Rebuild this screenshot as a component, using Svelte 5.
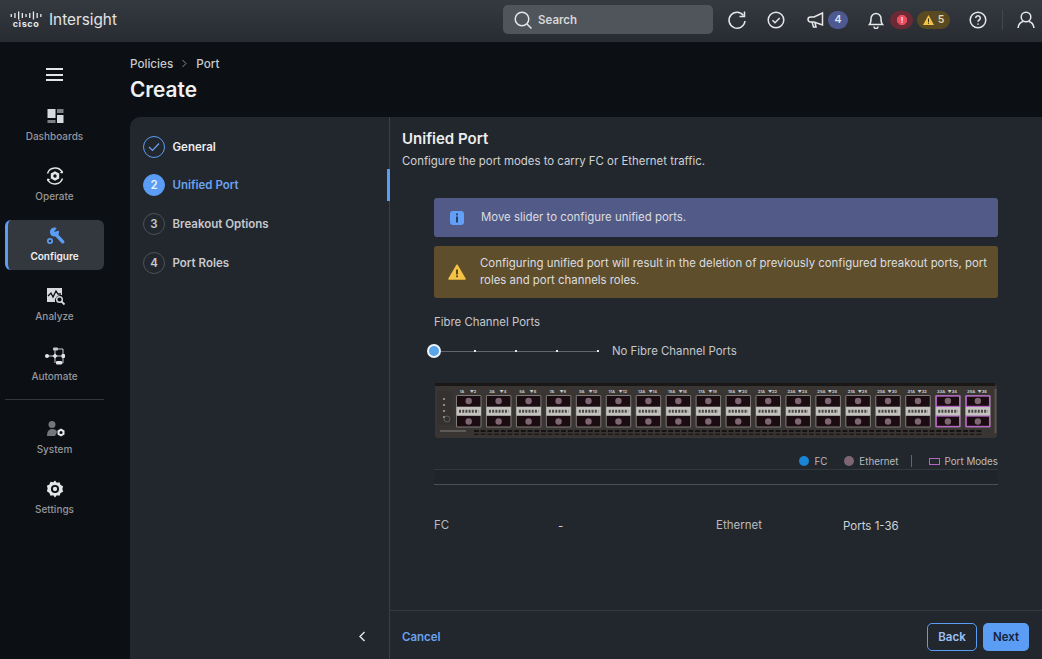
<script>
  const navTop = [
    { name: "Dashboards", icon: "dash" },
    { name: "Operate", icon: "operate" },
    { name: "Configure", icon: "wrench", active: true },
    { name: "Analyze", icon: "analyze" },
    { name: "Automate", icon: "automate" },
  ];
  const navBottom = [
    { name: "System", icon: "system" },
    { name: "Settings", icon: "gear" },
  ];
  const steps = [
    { n: 1, name: "General", state: "done" },
    { n: 2, name: "Unified Port", state: "current" },
    { n: 3, name: "Breakout Options", state: "todo" },
    { n: 4, name: "Port Roles", state: "todo" },
  ];
  const ports = Array.from({ length: 18 }, (_, i) => ({
    x: 22 + i * 29.95,
    top: i * 2 + 1,
    bottom: i * 2 + 2,
    mode: i >= 16,
  }));
  const vents = Array.from({ length: 76 }, (_, i) => 40 + i * 6.7);
  const logoBars = [3, 5, 8, 5, 3, 5, 8, 5, 3];
</script>

{#snippet navIcon(icon)}
  <svg class="nav-icon" viewBox="0 0 24 24" width="24" height="24">
    {#if icon === "dash"}
      <rect x="4.500" y="5" width="8" height="9" fill="#d8dadd" />
      <rect x="4.500" y="16" width="8" height="3" fill="#7c8085" />
      <rect x="14" y="5" width="6.500" height="4" fill="#7c8085" />
      <rect x="14" y="11" width="6.500" height="8" fill="#d8dadd" />
    {:else if icon === "operate"}
      <path d="M4.500 9.500a8 8 0 0 1 15-.5M19.500 14.500a8 8 0 0 1-15 .5" fill="none" stroke="#e4e5e7" stroke-width="1.400" />
      <path d="M19.800 6.500l-.3 3-2.800-.8zM4.200 17.500l.3-3 2.800.8z" fill="#e4e5e7" />
      <path d="M12 7.200l4.200 2.400v4.800L12 16.800l-4.200-2.400V9.600z" fill="#e4e5e7" />
      <circle cx="12" cy="12" r="1.700" fill="#0c0f13" />
    {:else if icon === "wrench"}
      <path d="M12 9.500l7.800 8.300" stroke="#5b9cf5" stroke-width="3.400" stroke-linecap="round" />
      <circle cx="11.500" cy="8" r="4.600" fill="#5b9cf5" />
      <path d="M11 8l4-6 5 3.500z" fill="#33373e" />
      <circle cx="7" cy="17" r="2.200" fill="none" stroke="#5b9cf5" stroke-width="1.700" />
    {:else if icon === "analyze"}
      <path d="M4 4h15v7a6 6 0 0 0-7 7H4z" fill="#d8dadd" />
      <path d="M5 12l3-3 2 4 3-6 2 3h3" fill="none" stroke="#0c0f13" stroke-width="1.300" />
      <circle cx="16.500" cy="15.500" r="2.800" fill="none" stroke="#d8dadd" stroke-width="1.400" />
      <path d="M18.500 17.500l3 3" stroke="#d8dadd" stroke-width="1.800" />
    {:else if icon === "automate"}
      <path d="M3 12h18M12 5v14M12 5h8v7M14 19h6v-7" fill="none" stroke="#c8cacd" stroke-width="1" />
      <circle cx="4" cy="12" r="2" fill="#e4e5e7" />
      <path d="M12 9.500l2.500 2.500-2.500 2.500-2.500-2.500z" fill="#e4e5e7" />
      <rect x="10" y="3.500" width="5" height="3" rx="1" fill="#c8cacd" />
      <rect x="18.500" y="10" width="3.500" height="4" rx="1" fill="#e4e5e7" />
      <rect x="13" y="17" width="6" height="3.500" rx="1" fill="#e4e5e7" />
    {:else if icon === "system"}
      <circle cx="9" cy="7.500" r="3.500" fill="#73777c" />
      <path d="M4 19c0-5 2-7 5-7s4.500 1 5 3l-2 4z" fill="#73777c" />
      <path d="M18 11.500l3.500 2v4l-3.500 2-3.500-2v-4z" fill="#e4e5e7" />
      <circle cx="18" cy="15.500" r="1.500" fill="#0c0f13" />
    {:else}
      <g transform="translate(1.200 1.200) scale(0.9)">
        <path d="M12 2.500l2 2.500 3-.5 1.200 3 2.800 1.500-.8 3 .8 3-2.800 1.500-1.200 3-3-.5-2 2.500-2-2.500-3 .5-1.200-3L3 14.500l.8-3-.8-3 2.800-1.500 1.200-3 3 .5z" fill="#e4e5e7" />
        <circle cx="12" cy="12" r="4.500" fill="#0c0f13" />
        <circle cx="12" cy="12" r="2.400" fill="#e4e5e7" />
      </g>
    {/if}
  </svg>
{/snippet}

<div class="page">
  <header class="topbar">
    <div class="brand">
      <div class="cisco">
        <svg width="32" height="9" viewBox="0 0 32 9">
          {#each logoBars as h, i}
            <rect x={i * 3.7 + 0.600} y={(9 - h) / 2} width="1.300" height={h} fill="#e8e9ea" />
          {/each}
        </svg>
        <span>cisco</span>
      </div>
      <span class="product">Intersight</span>
    </div>

    <div class="search">
      <svg width="20" height="20" viewBox="0 0 20 20" fill="none" stroke="#e6e7e8" stroke-width="1.500">
        <circle cx="9" cy="9" r="6.800" />
        <path d="M14 14l4.500 4.500" />
      </svg>
      <span>Search</span>
    </div>

    <div class="tools">
      <svg class="tool refresh" width="20" height="20" viewBox="0 0 20 20" fill="none" stroke="#e6e7e8" stroke-width="1.500">
        <path d="M16.500 5.500A8 8 0 1 0 18 11" />
        <path d="M17.500 1.500v5h-5" />
      </svg>
      <svg class="tool check" width="18" height="18" viewBox="0 0 18 18" fill="none" stroke="#e6e7e8" stroke-width="1.500">
        <circle cx="9" cy="9" r="7.800" />
        <path d="M5.500 9.200l2.500 2.500 4.700-4.700" />
      </svg>
      <svg class="tool megaphone" width="17" height="18" viewBox="0 0 17 18" fill="none" stroke="#e6e7e8" stroke-width="1.500">
        <path d="M15.500 2v12L7 11H3.500a2.500 2.500 0 0 1 0-5H7z" />
        <path d="M5 11l1.500 5h2.500l-1-4.500" />
      </svg>
      <span class="badge blue">4</span>
      <svg class="tool bell" width="16" height="18" viewBox="0 0 16 18" fill="none" stroke="#e6e7e8" stroke-width="1.500">
        <path d="M1.500 13.500c1.500-1.500 1.500-3 1.500-6a5 5 0 0 1 10 0c0 3 0 4.500 1.500 6z" />
        <path d="M6 15.500a2 2 0 0 0 4 0" />
      </svg>
      <span class="badge red">
        <svg width="10" height="10" viewBox="0 0 10 10">
          <path d="M3 0h4l3 3v4l-3 3H3L0 7V3z" fill="#ee4d5f" />
          <rect x="4.400" y="2" width="1.200" height="3.800" fill="#fff" />
          <rect x="4.400" y="6.600" width="1.200" height="1.300" fill="#fff" />
        </svg>
      </span>
      <span class="badge amber">
        <svg width="11" height="10" viewBox="0 0 11 10">
          <path d="M5.500 0L11 10H0z" fill="#f4c245" />
          <rect x="5" y="3.500" width="1" height="3.500" fill="#3a2f14" />
          <rect x="5" y="7.700" width="1" height="1.100" fill="#3a2f14" />
        </svg>
        5
      </span>
      <svg class="tool help" width="18" height="18" viewBox="0 0 18 18" fill="none" stroke="#e6e7e8" stroke-width="1.500">
        <circle cx="9" cy="9" r="7.800" />
        <path d="M6.700 7a2.300 2.300 0 1 1 3.500 2c-.8.500-1.200.9-1.200 1.800" />
        <path d="M9 12.500v1.200" />
      </svg>
      <span class="tool-sep"></span>
      <svg class="tool user" width="18" height="18" viewBox="0 0 18 18" fill="none" stroke="#e6e7e8" stroke-width="1.500">
        <circle cx="9" cy="6" r="4.800" />
        <path d="M1 17c.5-3.500 3-6 5-6.500M17 17c-.5-3.500-3-6-5-6.500" />
      </svg>
    </div>
  </header>

  <div class="below">
    <nav class="sidebar">
      <button class="hamburger" aria-label="Menu"><i></i><i></i><i></i></button>
      {#each navTop as item}
        <div class="nav-item" class:active={item.active}>
          {@render navIcon(item.icon)}
          <span>{item.name}</span>
        </div>
      {/each}
      <hr />
      {#each navBottom as item}
        <div class="nav-item">
          {@render navIcon(item.icon)}
          <span>{item.name}</span>
        </div>
      {/each}
    </nav>

    <main class="main">
      <div class="crumbs">
        <span>Policies</span>
        <svg width="7" height="9" viewBox="0 0 7 9" fill="none" stroke="#8b8f94" stroke-width="1"><path d="M1.500 1l3.500 3.500L1.500 8" /></svg>
        <span>Port</span>
      </div>
      <h1>Create</h1>

      <section class="card">
        <aside class="wizard">
          <ol>
            {#each steps as step}
              <li class={step.state}>
                <span class="dot">
                  {#if step.state === "done"}
                    <svg width="12" height="10" viewBox="0 0 12 10" fill="none" stroke="#6aa2ee" stroke-width="1.200"><path d="M1 5l3.500 3.500L11 1.500" /></svg>
                  {:else}
                    {step.n}
                  {/if}
                </span>
                {step.name}
              </li>
            {/each}
          </ol>
          <svg class="collapse" width="8" height="11" viewBox="0 0 8 11" fill="none" stroke="#e6e7e8" stroke-width="1.400"><path d="M6.500 1L2 5.500 6.500 10" /></svg>
        </aside>

        <div class="panel">
          <div class="marker"></div>
          <div class="panel-head">
            <h2>Unified Port</h2>
            <p>Configure the port modes to carry FC or Ethernet traffic.</p>
          </div>

          <div class="panel-body">
            <div class="alert info">
              <svg width="16" height="16" viewBox="0 0 16 16">
                <rect x="1" y="1" width="14" height="14" rx="3" fill="#62a0f8" />
                <rect x="7.200" y="3.500" width="1.600" height="1.800" fill="#1b2a44" />
                <rect x="7.200" y="6.500" width="1.600" height="6" fill="#1b2a44" />
              </svg>
              <span>Move slider to configure unified ports.</span>
            </div>
            <div class="alert warn">
              <svg width="18" height="16" viewBox="0 0 18 16">
                <path d="M9 1.200L17 15H1z" fill="#f4c245" stroke="#f4c245" stroke-width="1.500" stroke-linejoin="round" />
                <rect x="8.200" y="5.500" width="1.600" height="5" fill="#3a2f14" />
                <rect x="8.200" y="11.500" width="1.600" height="1.700" fill="#3a2f14" />
              </svg>
              <span>Configuring unified port will result in the deletion of previously configured breakout ports, port roles and port channels roles.</span>
            </div>

            <div class="fc-label">Fibre Channel Ports</div>
            <div class="slider-row">
              <div class="slider">
                <div class="track"></div>
                {#each [25, 50, 75, 100] as pos}
                  <i class="tick" style="left: {pos}%"></i>
                {/each}
                <div class="thumb"></div>
              </div>
              <span>No Fibre Channel Ports</span>
            </div>

            <svg class="chassis" viewBox="0 0 564 56" width="564" height="56">
              <rect x="1" y="1" width="562" height="54" rx="3" fill="#393533" />
              <rect x="1" y="0" width="560" height="3" fill="#1a1817" />
              <rect x="560.500" y="6" width="2" height="44" fill="#57534f" />
              <rect x="3" y="8" width="16" height="34" fill="#343130" />
              {#each [0, 1, 2, 3] as i}
                <circle cx="10" cy={16 + i * 6} r="0.900" fill="#b5b3b1" />
              {/each}
              <circle cx="13" cy="36" r="3" fill="none" stroke="#777" stroke-width="0.600" />
              <rect x="6" y="47" width="26" height="2" fill="#5d5a57" />
              {#each ports as port}
                <g>
                  <text class="pnum" x={port.x + 6} y="10">{port.top}A</text>
                  <text class="pnum" x={port.x + 17} y="10">▼{port.bottom}</text>
                  <rect x={port.x} y="12" width="25.500" height="32.500" rx="1.500" fill="#7e7b78" />
                  <rect x={port.x + 1} y="13" width="23.500" height="10.500" fill="#1a0c10" stroke={port.mode ? "#b565c6" : "none"} stroke-width="1.400" />
                  <rect x={port.x + 1} y="33" width="23.500" height="10.500" fill="#1a0c10" stroke={port.mode ? "#b565c6" : "none"} stroke-width="1.400" />
                  <circle cx={port.x + 12.700} cy="18" r="3.200" fill="#7d6672" />
                  <circle cx={port.x + 12.700} cy="38.500" r="3.200" fill="#7d6672" />
                  <rect x={port.x + 0.500} y="24" width="24.500" height="8.500" fill="#c4c3c0" />
                  <path d="M{port.x + 3} 28.200h19.500" stroke="#4a4846" stroke-width="3" stroke-dasharray="2 1.200" />
                </g>
              {/each}
              {#each vents as vx}
                <rect x={vx} y="47" width="4.800" height="2" fill="#141212" />
                <rect x={vx} y="50.500" width="4.800" height="1.600" fill="#1e1b1b" />
              {/each}
            </svg>

            <div class="legend">
              <span class="key"><i class="round fc"></i>FC</span>
              <span class="key"><i class="round eth"></i>Ethernet</span>
              <span class="legend-sep"></span>
              <span class="key"><i class="mode"></i>Port Modes</span>
            </div>
            <div class="rules"></div>

            <div class="summary">
              <span>FC</span>
              <span class="val">-</span>
              <span>Ethernet</span>
              <span class="val">Ports 1-36</span>
            </div>
          </div>

          <footer class="panel-foot">
            <a class="cancel" href="#cancel">Cancel</a>
            <div class="buttons">
              <button class="btn back">Back</button>
              <button class="btn next">Next</button>
            </div>
          </footer>
        </div>
      </section>
    </main>
  </div>
</div>

<style>
  :global(body) {
    margin: 0;
    background: #0c0f13;
    font-family: Inter, "Liberation Sans", sans-serif;
    overflow: hidden;
  }

  .page {
    height: 659px;
    display: flex;
    flex-direction: column;
    overflow: hidden;
  }

  .topbar {
    height: 42px;
    flex: none;
    box-sizing: border-box;
    display: flex;
    align-items: center;
    padding: 0 0 3px 10px;
    background: linear-gradient(#353a40, #282c32);
  }

  .brand {
    width: 493px;
    display: flex;
    align-items: center;
    gap: 7px;
  }

  .cisco {
    display: flex;
    flex-direction: column;
    align-items: center;
    width: 32px;
    color: #e8e9ea;
  }

  .cisco span {
    font-size: 9px;
    line-height: 8px;
    font-weight: 700;
    letter-spacing: 0.6px;
  }

  .product {
    color: #e2e3e5;
    font-size: 15.300px;
  }

  .search {
    width: 210px;
    height: 29px;
    box-sizing: border-box;
    padding-left: 10px;
    display: flex;
    align-items: center;
    gap: 5px;
    background: #50555c;
    border-radius: 5px;
    color: #d6d7d9;
    font-size: 11.500px;
    font-weight: 600;
  }

  .tools {
    display: flex;
    align-items: center;
    color: #e6e7e8;
  }

  .tool { flex: none; }
  .refresh { margin-left: 14px; }
  .check { margin-left: 20px; }
  .megaphone { margin-left: 22px; }
  .bell { margin-left: 20px; }
  .help { margin-left: 19px; }
  .user { margin-left: 14px; }

  .tool-sep {
    width: 1px;
    height: 20px;
    margin-left: 15px;
    background: #43474d;
  }

  .badge {
    height: 18px;
    border-radius: 9px;
    display: flex;
    align-items: center;
    justify-content: center;
    gap: 4px;
    font-size: 10.500px;
    font-weight: 600;
  }

  .badge.blue { width: 20px; margin-left: 4px; background: #4d5a92; color: #dfe3f2; }
  .badge.red { width: 23px; margin-left: 6px; background: #6a2a36; }
  .badge.amber { width: 33px; margin-left: 4px; background: #5a4a22; color: #e3d7b5; }

  .below {
    flex: 1;
    display: flex;
    min-height: 0;
  }

  .sidebar {
    width: 130px;
    flex: none;
    box-sizing: border-box;
    padding: 0 26px 0 5px;
    display: flex;
    flex-direction: column;
  }

  .hamburger {
    height: 50px;
    margin-bottom: 8px;
    background: none;
    border: 0;
    display: flex;
    flex-direction: column;
    align-items: center;
    justify-content: center;
    gap: 3.500px;
    padding: 15px 0 0;
  }

  .hamburger i {
    width: 17px;
    height: 2px;
    background: #e4e5e7;
  }

  .nav-item {
    height: 50px;
    margin-bottom: 10px;
    box-sizing: border-box;
    padding-top: 4px;
    display: flex;
    flex-direction: column;
    align-items: center;
    gap: 2px;
    color: #94979c;
    font-size: 10px;
    font-weight: 500;
    border-radius: 6px;
  }

  .nav-item.active {
    background: #33373e;
    border-left: 3px solid #5b9cf5;
    padding-right: 3px;
    color: #f0f1f2;
    font-weight: 600;
  }

  .nav-icon { flex: none; }

  .sidebar hr {
    width: 100%;
    margin: -1px 0 13px;
    border: 0;
    height: 1px;
    background: #33373c;
  }

  .main {
    flex: 1;
    min-width: 0;
    display: flex;
    flex-direction: column;
  }

  .crumbs {
    margin-top: 14px;
    height: 15px;
    display: flex;
    align-items: center;
    gap: 8px;
    color: #c8cacd;
    font-size: 11.700px;
    font-weight: 500;
  }

  h1 {
    margin: 6px 0 14px;
    color: #eff0f1;
    font-size: 20.800px;
    line-height: 26px;
    font-weight: 600;
  }

  .card {
    flex: 1;
    min-height: 0;
    display: flex;
    background: #22272e;
    border-top-left-radius: 10px;
  }

  .wizard {
    width: 260px;
    flex: none;
    box-sizing: border-box;
    border-right: 1px solid #3a3f46;
    display: flex;
    flex-direction: column;
  }

  .wizard ol {
    list-style: none;
    margin: 0;
    padding: 19px 0 0 13px;
    flex: 1;
  }

  .wizard li {
    height: 21px;
    margin-bottom: 17.800px;
    display: flex;
    align-items: center;
    gap: 7.500px;
    color: #c6c8cb;
    font-size: 11.500px;
    font-weight: 600;
  }

  .wizard li.done { color: #eceded; }
  .wizard li.current { color: #6aa2ee; }

  .dot {
    width: 20px;
    height: 20px;
    flex: none;
    border-radius: 50%;
    border: 1px solid #4d5157;
    display: flex;
    align-items: center;
    justify-content: center;
    font-size: 11.500px;
    font-weight: 600;
  }

  .done .dot { border-color: #5b9cf5; }
  .current .dot { background: #5b9cf5; border-color: #5b9cf5; color: #e9f0fb; }

  .collapse {
    align-self: flex-end;
    margin: 0 23px 17px 0;
  }

  .panel {
    position: relative;
    flex: 1;
    min-width: 0;
    display: flex;
    flex-direction: column;
  }

  .marker {
    position: absolute;
    left: -3px;
    top: 52px;
    width: 3px;
    height: 32px;
    background: #5b9cf5;
  }

  .panel-head {
    padding: 12px 0 0 12px;
  }

  h2 {
    margin: 0 0 4px;
    color: #eceded;
    font-size: 15px;
    line-height: 20px;
    font-weight: 600;
  }

  .panel-head p {
    margin: 0;
    color: #d0d2d4;
    font-size: 11.400px;
    line-height: 16px;
  }

  .panel-body {
    flex: 1;
    width: 564px;
    margin: 29px 0 0 44px;
  }

  .alert {
    box-sizing: border-box;
    display: flex;
    align-items: center;
    gap: 16px;
    padding: 0 8px 0 14px;
    border-radius: 3px;
    color: #dcdde0;
    font-size: 11.400px;
    line-height: 17px;
  }

  .alert svg { flex: none; }
  .alert.info { height: 39px; background: #525a87; padding-left: 15px; gap: 16px; }
  .alert.warn { height: 52px; margin-top: 9px; background: #5e4e2b; gap: 14px; }

  .fc-label {
    margin-top: 16px;
    color: #c6c8cb;
    font-size: 11.400px;
    line-height: 16px;
  }

  .slider-row {
    margin-top: 13px;
    height: 16px;
    display: flex;
    align-items: center;
    color: #c6c8cb;
    font-size: 11.400px;
  }

  .slider {
    position: relative;
    width: 164px;
    height: 16px;
    margin-right: 14px;
    flex: none;
  }

  .track {
    position: absolute;
    left: 0;
    right: 0;
    top: 7.500px;
    height: 1px;
    background: #62666c;
  }

  .tick {
    position: absolute;
    top: 7px;
    width: 2px;
    height: 2px;
    margin-left: -1px;
    background: #e6e7e8;
  }

  .thumb {
    position: absolute;
    left: -7px;
    top: 1px;
    width: 10px;
    height: 10px;
    border-radius: 50%;
    background: #5aa5ea;
    border: 2px solid #eef4fb;
  }

  .chassis {
    display: block;
    margin-top: 24px;
  }

  .pnum {
    fill: #c9c7c4;
    font-size: 4px;
    font-weight: 700;
    font-family: Inter, sans-serif;
    text-anchor: middle;
  }

  .legend {
    margin-top: 15px;
    height: 14px;
    display: flex;
    align-items: center;
    justify-content: flex-end;
    color: #b9bbbe;
    font-size: 9.800px;
  }

  .key {
    display: flex;
    align-items: center;
    gap: 5px;
    margin-left: 17px;
  }

  .round {
    width: 10px;
    height: 10px;
    border-radius: 50%;
  }

  .round.fc { background: #1a85d6; }
  .round.eth { background: #7d6672; }

  .legend-sep {
    width: 1px;
    height: 12px;
    margin-left: 12px;
    background: #62666c;
  }

  .mode {
    width: 9px;
    height: 5px;
    border: 1px solid #b565c6;
  }

  .rules {
    height: 14px;
    margin-top: 1px;
    border-top: 1px solid #33383f;
    border-bottom: 1px solid #4b4f55;
    background: #1f242a;
  }

  .summary {
    margin-top: 32px;
    display: grid;
    grid-template-columns: 124px 158px 127px 1fr;
    color: #b9bbbe;
    font-size: 11.500px;
    line-height: 16px;
  }

  .summary .val {
    color: #d0d2d4;
    padding-top: 1px;
  }

  .panel-foot {
    height: 45px;
    flex: none;
    border-top: 1px solid #33383f;
    display: flex;
    align-items: center;
    justify-content: space-between;
    padding: 3px 13px 0 12px;
  }

  .cancel {
    color: #6aa2ee;
    font-size: 11.500px;
    font-weight: 600;
    text-decoration: none;
  }

  .buttons {
    display: flex;
    gap: 6px;
  }

  .btn {
    height: 28px;
    box-sizing: border-box;
    border-radius: 5px;
    font-family: inherit;
    font-size: 11.500px;
    font-weight: 600;
    padding: 0;
  }

  .back {
    width: 50px;
    background: transparent;
    border: 1.500px solid #5b9cf5;
    color: #9cc2f5;
  }

  .next {
    width: 46px;
    background: #5b9cf5;
    border: 0;
    color: #14233b;
  }
</style>
